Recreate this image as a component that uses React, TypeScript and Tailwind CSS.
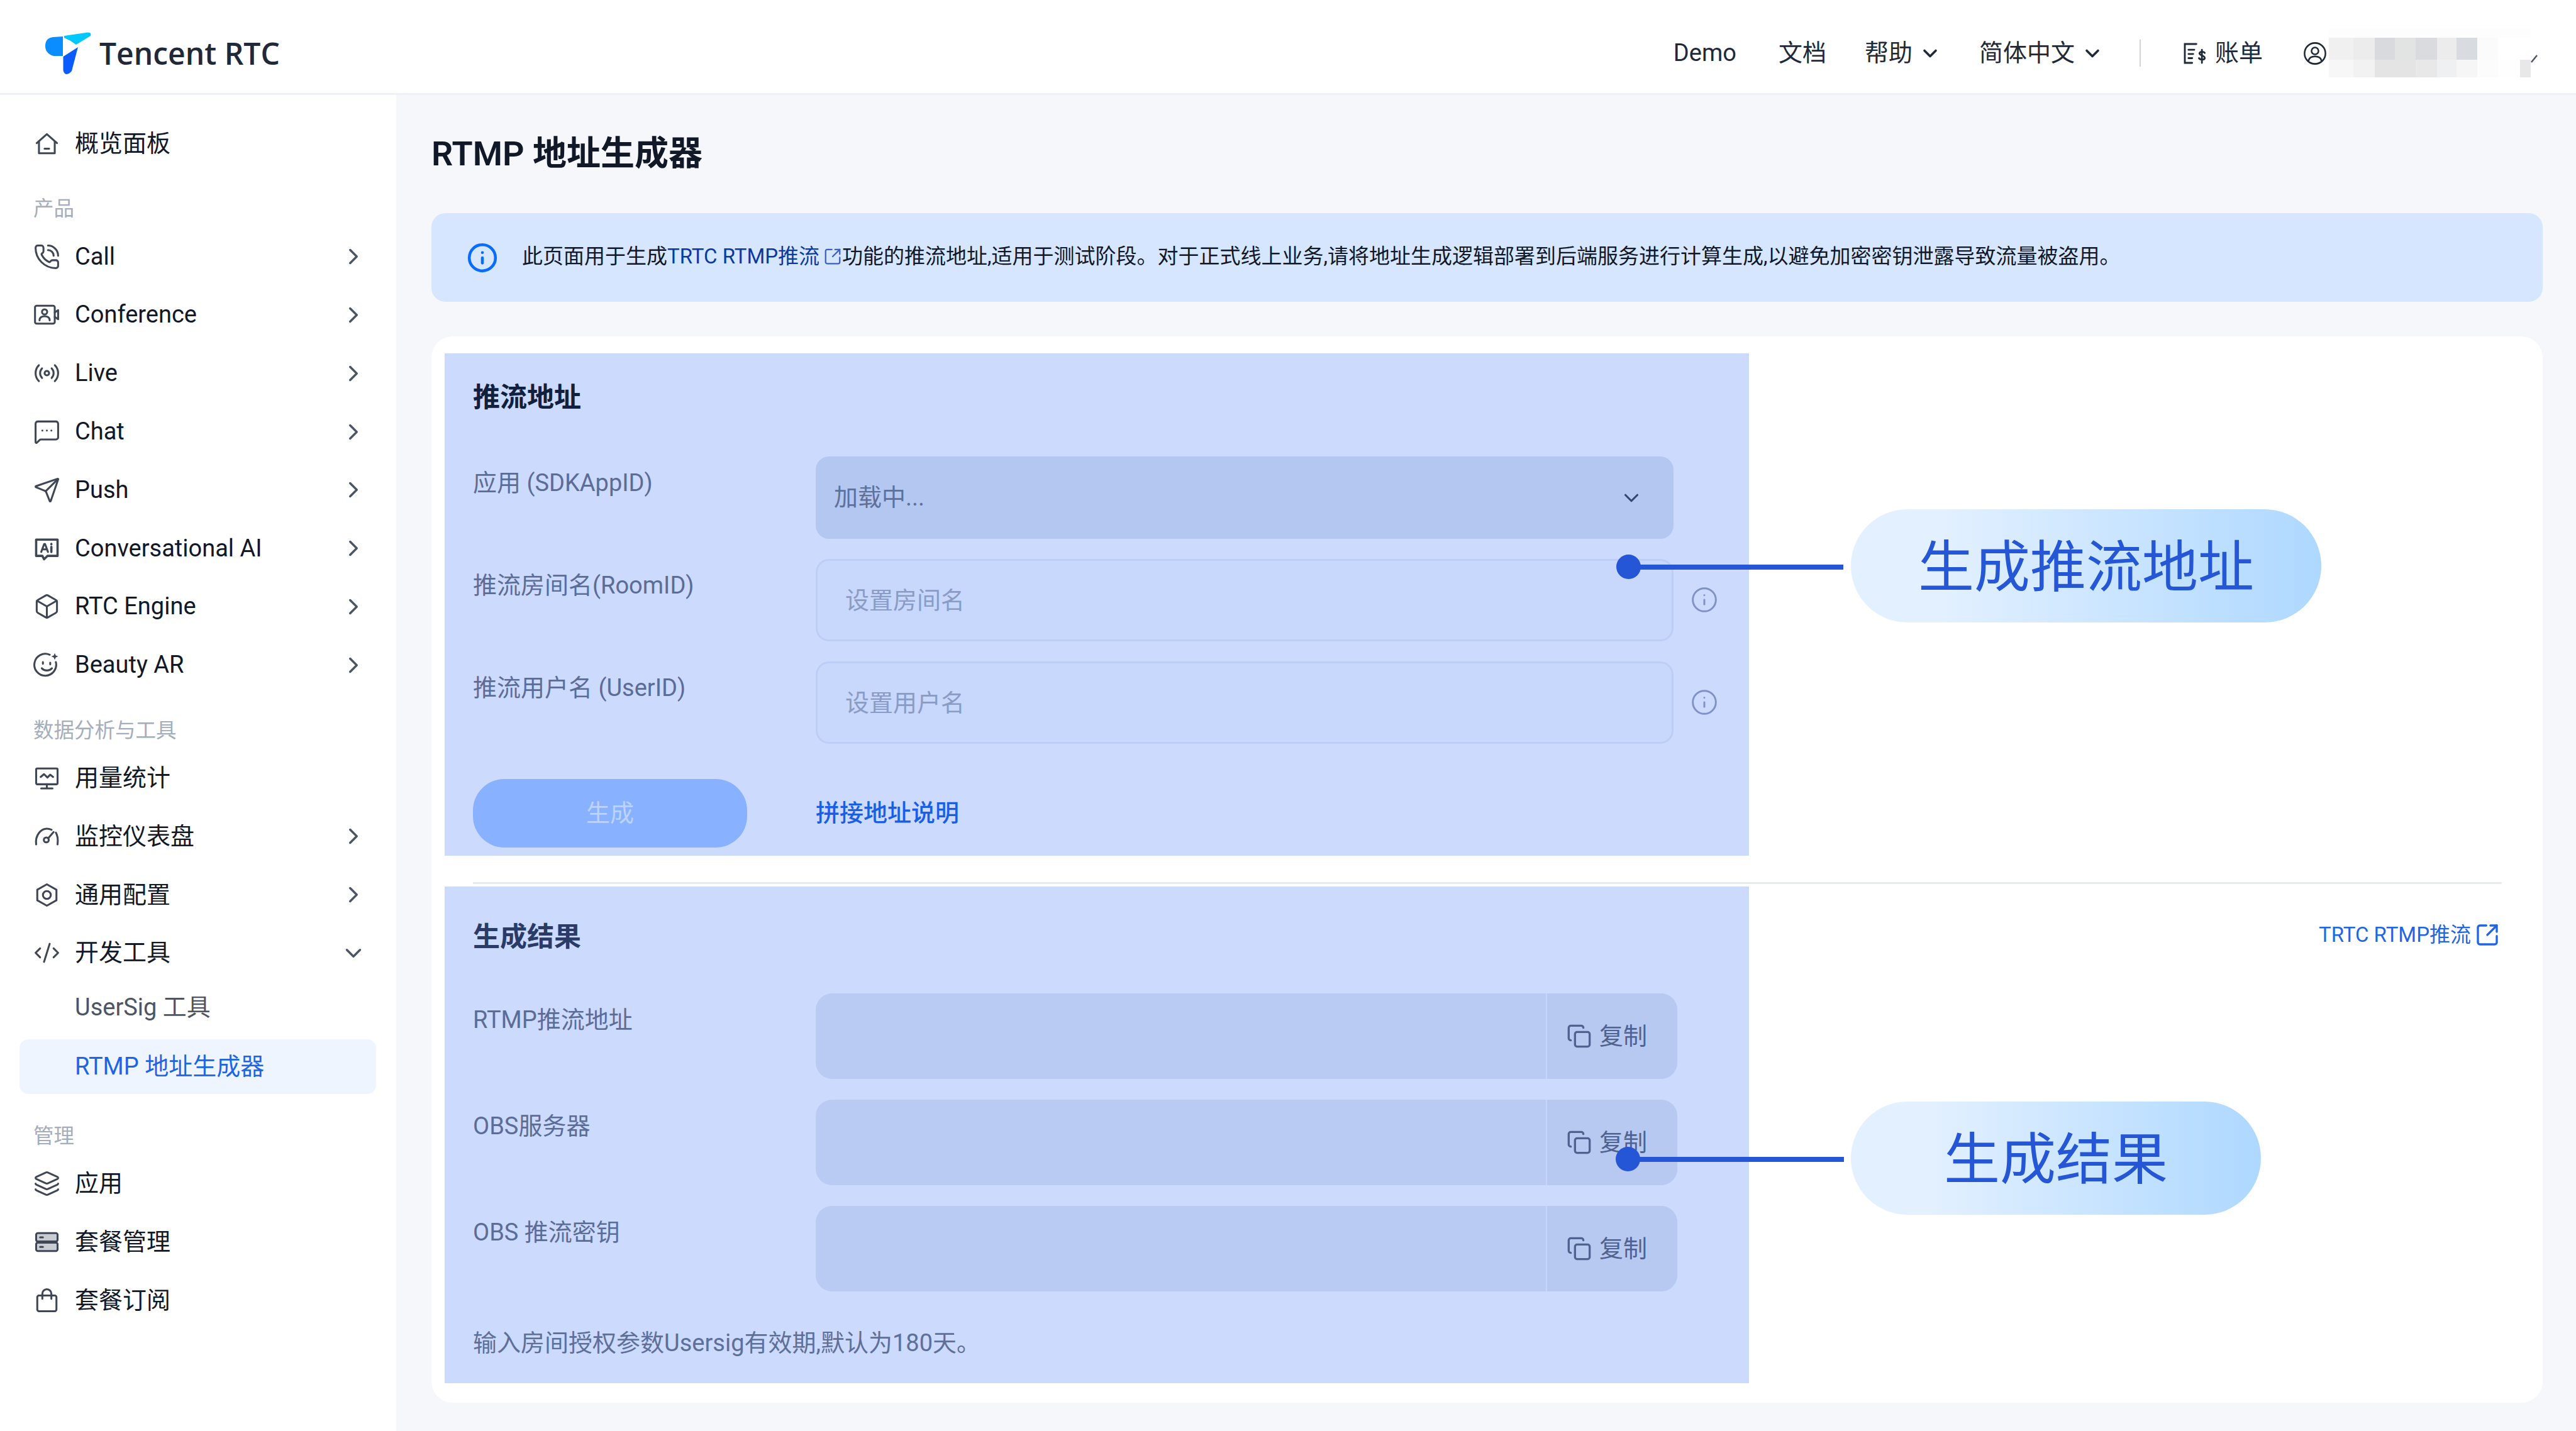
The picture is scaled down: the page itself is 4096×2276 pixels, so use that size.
import React from "react";
import { ChevronRight, ChevronDown, PhoneCall, Radio, MessageSquareMore, Send, Box, Layers, Copy, SquareArrowOutUpRight, Info, CodeXml } from "lucide-react";

const I = ({ children }: { children: React.ReactNode }) => (
  <svg viewBox="0 0 24 24" width={43} height={43} fill="none" stroke="currentColor" strokeWidth={1.7} strokeLinecap="round" strokeLinejoin="round">{children}</svg>
);
const L = (C: any) => <C size={43} strokeWidth={1.7} />;

const Home = () => <I><path d="M3 11.5 12 3.5l9 8" /><path d="M5 10v10.5h14V10" /><path d="M10 16.5h4" /></I>;
const Conf = () => <I><rect x="1.5" y="4" width="17.5" height="16" rx="1.5" /><path d="M19 10l3-2v8l-3-2" /><circle cx="10" cy="9.5" r="2.3" /><path d="M5.5 17c0-2.5 2-3.6 4.5-3.6s4.5 1.1 4.5 3.6" /></I>;
const AI = () => <I><path d="M2.5 4h19v14.5h-9l-3 3-1.5-3H2.5z" strokeWidth={2} /><path d="M7 15l2.6-7h.8l2.6 7M8 12.7h4" strokeWidth={1.7} /><path d="M16 10.5V15M16 7.8v.4" strokeWidth={2} /></I>;
const Beauty = () => <I><path d="M20 9.5A9.7 9.7 0 1 1 14.5 3" /><path d="M8.5 9.5v1.5M15 10v1.5" /><path d="M7.5 15c2.3 2.6 6.7 2.6 9 0" /><path d="M19 1.5l.9 2.1 2.1.9-2.1.9-.9 2.1-.9-2.1-2.1-.9 2.1-.9z" fill="currentColor" stroke="none" /></I>;
const Stats = () => <I><rect x="2.5" y="3.5" width="19" height="14" rx="1" /><path d="M6.5 11l3-2.5 3 3 2.5-2.5 2.5 2" /><path d="M12 17.5V21M7 21.2h10" /></I>;
const Gauge = () => <I><path d="M2.5 19C1.5 10.5 7 5 12 5c1.6 0 3 .4 4.2 1" /><path d="M20 8.5c1.6 2.6 2 6.5 1.5 10.5" /><circle cx="11.5" cy="15" r="2.2" /><path d="M13.2 13.5 18 8" /></I>;
const Gear = () => <I><path d="M12 2.5 20.5 7.3v9.4L12 21.5l-8.5-4.8V7.3z" /><circle cx="12" cy="12" r="3.5" /></I>;
const Plan = () => <I><rect x="2.5" y="4" width="19" height="7.5" rx="1.5" fill="#c9ccd2" /><rect x="2.5" y="12.5" width="19" height="7.5" rx="1.5" fill="#c9ccd2" /><path d="M6 7.8h2.5M6 16.3h2.5" /></I>;
const Bag = () => <I><rect x="3.5" y="7.5" width="17" height="14" rx="1.5" /><path d="M8 10.5V6a4 4 0 0 1 8 0v4.5" /></I>;
const Chev = () => <ChevronRight size={42} strokeWidth={2} className="text-[#4b5563]" />;

function Item({ icon, label, chev = true, open = false }: { icon: React.ReactNode; label: string; chev?: boolean; open?: boolean }) {
  return (
    <div className="flex h-[92.8px] items-center pl-[53px] pr-[47px] text-[38px] text-[#111827]">
      <span className="flex w-[43px] shrink-0 justify-center text-[#3f4654]">{icon}</span>
      <span className="ml-[23px] flex-1">{label}</span>
      {chev && (open ? <ChevronDown size={42} strokeWidth={2} className="text-[#4b5563]" /> : <Chev />)}
    </div>
  );
}
const Group = ({ label, mt }: { label: string; mt: string }) => (
  <div className={`flex h-[58px] items-center pl-[53px] text-[32.5px] text-[#a4adbb] ${mt}`}>{label}</div>
);

function Sidebar() {
  return (
    <aside className="h-full w-[630px] shrink-0 bg-white pt-[31px]">
      <Item icon={<Home />} label="概览面板" chev={false} />
      <Group label="产品" mt="mt-[29px]" />
      <Item icon={L(PhoneCall)} label="Call" />
      <Item icon={<Conf />} label="Conference" />
      <Item icon={L(Radio)} label="Live" />
      <Item icon={L(MessageSquareMore)} label="Chat" />
      <Item icon={L(Send)} label="Push" />
      <Item icon={<AI />} label="Conversational AI" />
      <Item icon={L(Box)} label="RTC Engine" />
      <Item icon={<Beauty />} label="Beauty AR" />
      <Group label="数据分析与工具" mt="mt-[29px]" />
      <Item icon={<Stats />} label="用量统计" chev={false} />
      <Item icon={<Gauge />} label="监控仪表盘" />
      <Item icon={<Gear />} label="通用配置" />
      <Item icon={L(CodeXml)} label="开发工具" open />
      <div className="-mt-[3px] flex h-[87px] items-center pl-[119px] text-[38px] text-[#4b5563]">UserSig 工具</div>
      <div className="mx-[31px] mt-[7px] flex h-[87px] w-[567px] items-center rounded-[14px] bg-[#eff5ff] pl-[88px] text-[38px] text-[#1c66e5]">RTMP 地址生成器</div>
      <Group label="管理" mt="mt-[38px]" />
      <Item icon={L(Layers)} label="应用" chev={false} />
      <Item icon={<Plan />} label="套餐管理" chev={false} />
      <Item icon={<Bag />} label="套餐订阅" chev={false} />
    </aside>
  );
}

function Mosaic() {
  const xs = [0, 39, 73, 105, 138, 172, 203, 236, 269, 304];
  const top = ["#f0f0f0", "#ececec", "#d8dade", "#e2e3e3", "#d9dbdf", "#ececec", "#d8dbe0", "#fbfbfb"];
  const bot = ["#f7f7f7", "#f2f2f2", "#e4e4e4", "#e4e4e4", "#e8e8e8", "#eef0f2", "#f6f6f6", "#fcfcfc", "#fefefe"];
  return (
    <svg width={321} height={77} shapeRendering="crispEdges">
      <rect x={0} y={0} width={321} height={14} fill="#fdfdfd" />
      {top.map((c, i) => <rect key={i} x={xs[i]} y={14} width={xs[i + 1] - xs[i]} height={35} fill={c} />)}
      {bot.map((c, i) => <rect key={i} x={xs[i]} y={49} width={xs[i + 1] - xs[i]} height={28} fill={c} />)}
      <rect x={304} y={49} width={17} height={28} fill="#e8e8e8" />
    </svg>
  );
}

function Header() {
  return (
    <header className="flex h-[151px] shrink-0 items-center border-b-[3px] border-[#eef1f6] bg-white pr-[61px] pt-[21px] text-[38px] text-[#1f2937]">
      <svg className="ml-[72px]" width={74} height={70} viewBox="72 50 74 70">
        <path d="M102 57 140 51.6Q146 52 144 57L121 71Q112 64 102 60Z" fill="#00c8fc" />
        <path d="M100 58V89H85Q72 85 72 73 72 60 85 59Z" fill="#0a8dff" />
        <path d="M100.5 90 124 75 114 113Q108 120 103 117 100 114 100.5 108Z" fill="#0a5cff" />
      </svg>
      <span className="ml-[12px] font-['Open_Sans','Inter',sans-serif] text-[48px] font-semibold text-[#1f2937]">Tencent RTC</span>
      <div className="ml-auto flex items-center">
        <span>Demo</span>
        <span className="ml-[67px]">文档</span>
        <span className="ml-[61px]">帮助</span>
        <ChevronDown size={36} strokeWidth={2.4} className="ml-[10px]" />
        <span className="ml-[60px]">简体中文</span>
        <ChevronDown size={36} strokeWidth={2.4} className="ml-[10px]" />
        <span className="ml-[57px] h-[43px] w-[2px] bg-[#d1d5db]" />
        <svg className="ml-[65px]" viewBox="0 0 24 24" width={40} height={44} fill="none" stroke="currentColor" strokeWidth={1.7} strokeLinecap="round">
          <path d="M14 3H3v18h7" /><path d="M6.5 8.5H12M6.5 12.5H11M6.5 16.5H10" />
          <path d="M22 11.5c-.7-1.3-4.5-1.7-5 .3-.4 2 5 2 5 4.5 0 2-4.5 2-5.5.2M19.3 8.500v12.500" />
        </svg>
        <span className="ml-[13px]">账单</span>
        <svg className="ml-[64px]" viewBox="0 0 24 24" width={38} height={38} fill="none" stroke="currentColor" strokeWidth={1.6}>
          <circle cx="12" cy="12" r="10.5" /><circle cx="12" cy="9.5" r="3.5" /><path d="M5.5 19.5c.5-3.5 3-4.5 6.5-4.5s6 1 6.5 4.5" />
        </svg>
        <div className="ml-[3px]"><Mosaic /></div>
        <svg width={11} height={14} className="mt-[16px]"><path d="M1 13 10 2" stroke="#4b5563" strokeWidth={2.5} /></svg>
      </div>
    </header>
  );
}

const Label = ({ children }: { children: React.ReactNode }) => (
  <div className="h-[80px] w-[545px] shrink-0 pt-[2px] text-[38px] leading-[80px] text-[#5b6c96]">{children}</div>
);
const InfoI = () => <Info size={44} strokeWidth={1.6} className="ml-[27px] text-[#7f92c8]" />;

function InputRow({ label, ph }: { label: string; ph: string }) {
  return (
    <div className="mb-[33px] flex h-[130px]">
      <Label>{label}</Label>
      <div className="flex h-[131px] w-[1364px] items-center rounded-[21px] border-[3px] border-[#bccdf6] bg-[#c8d7fc] pl-[44px] pt-[2px] text-[38px] text-[#8a9bc4]">{ph}</div>
      <div className="flex items-center"><InfoI /></div>
    </div>
  );
}
function CopyRow({ label }: { label: string }) {
  return (
    <div className="mb-[33px] flex h-[136px]">
      <Label>{label}</Label>
      <div className="flex h-[136px] w-[1370px] overflow-hidden rounded-[26px] bg-[#bacbf3]">
        <div className="w-[1163px] border-r-[2px] border-[#c6d5f8]" />
        <div className="flex flex-1 items-center bg-[#b7c9f1] pl-[31px] text-[38px] text-[#50628f]">
          <Copy size={40} strokeWidth={2} />
          <span className="ml-[12px]">复制</span>
        </div>
      </div>
    </div>
  );
}

function Callout({ text, left, top, w, h, dotLeft, dotTop }: { text: string; left: string; top: string; w: string; h: string; dotLeft: string; dotTop: string }) {
  return (
    <>
      <div className={`absolute z-10 h-[39px] w-[39px] rounded-full bg-[#2456d6] ${dotLeft} ${dotTop}`} />
      <div className={`absolute z-10 flex items-center justify-center rounded-full bg-linear-to-r from-[#e2f0ff] from-20% to-[#aed8ff] pt-[5px] text-[89px] text-[#2456d6] ${left} ${top} ${w} ${h}`}>{text}</div>
    </>
  );
}

function Card() {
  return (
    <div className="relative mt-[55px] h-[1696px] rounded-[34px] bg-white pl-[21px] pt-[27px]">
      <section className="h-[799px] w-[2074px] bg-[#ccdafe] pl-[45px] pt-[38px]">
        <h2 className="mb-[62px] h-[64px] text-[43px] font-semibold leading-[64px] text-[#10203f]">推流地址</h2>
        <div className="mb-[33px] flex h-[130px]">
          <Label>应用 (SDKAppID)</Label>
          <div className="flex h-[131px] w-[1364px] items-center justify-between rounded-[21px] bg-[#b3c7f1] pl-[29px] pr-[48px] text-[38px] text-[#5f7099]">
            <span>加载中...</span>
            <ChevronDown size={38} strokeWidth={2} className="text-[#34456f]" />
          </div>
        </div>
        <InputRow label="推流房间名(RoomID)" ph="设置房间名" />
        <InputRow label="推流用户名 (UserID)" ph="设置用户名" />
        <div className="mt-[57px] flex items-center">
          <button className="h-[109px] w-[436px] rounded-[50px] bg-[#88b1ff] text-[38px] text-[#bcd3ff]">生成</button>
          <a className="ml-[109px] text-[38px] font-medium text-[#1a5ee8]">拼接地址说明</a>
        </div>
      </section>
      <div className="ml-[45px] mr-[65px] mt-[42px] h-[3px] bg-[#e6eaf3]" />
      <div className="mt-[4px] flex">
        <section className="h-[790px] w-[2074px] shrink-0 bg-[#ccdafe] pl-[45px] pt-[48px]">
          <h2 className="mb-[58px] h-[64px] text-[43px] font-semibold leading-[64px] text-[#2b3b67]">生成结果</h2>
          <CopyRow label="RTMP推流地址" />
          <CopyRow label="OBS服务器" />
          <CopyRow label="OBS 推流密钥" />
          <p className="mt-[57px] text-[38px] leading-[50px] text-[#5e6f98]">输入房间授权参数Usersig有效期,默认为180天。</p>
        </section>
        <div className="flex flex-1 justify-end pr-[68px] pt-[52px]">
          <a className="flex h-[50px] items-center text-[33px] text-[#1f66e0]">TRTC RTMP推流<SquareArrowOutUpRight size={40} strokeWidth={2} className="ml-[6px]" /></a>
        </div>
      </div>

      <div className="absolute left-[1903px] top-[363px] z-10 h-[8px] w-[342px] bg-[#2456d6]" />
      <Callout text="生成推流地址" left="left-[2257px]" top="top-[275px]" w="w-[748px]" h="h-[180px]" dotLeft="left-[1884px]" dotTop="top-[347px]" />
      <div className="absolute left-[1902px] top-[1305px] z-10 h-[8px] w-[344px] bg-[#2456d6]" />
      <Callout text="生成结果" left="left-[2257px]" top="top-[1217px]" w="w-[652px]" h="h-[180px]" dotLeft="left-[1883px]" dotTop="top-[1289px]" />
    </div>
  );
}

export default function App() {
  return (
    <div className="flex h-[2276px] w-[4096px] flex-col overflow-hidden bg-[#f6f7fb] font-['Roboto','Noto_Sans_CJK_SC',sans-serif]">
      <Header />
      <div className="flex min-h-0 flex-1">
        <Sidebar />
        <main className="flex-1 pl-[56px] pr-[53px] pt-[59px]">
          <h1 className="h-[70px] text-[54px] font-semibold leading-[70px] text-[#111827]">RTMP 地址生成器</h1>
          <div className="mt-[59px] flex h-[141px] items-center rounded-[22px] bg-[#d5e6fe] pl-[56px] text-[33px] text-[#111827]">
            <Info size={50} strokeWidth={2.2} className="text-[#0a6cff]" />
            <span className="ml-[38px] -mt-[3px] flex items-center whitespace-nowrap">
              此页面用于生成<span className="text-[#0b3a9f]">TRTC RTMP推流</span>
              <SquareArrowOutUpRight size={30} strokeWidth={1.8} className="ml-[6px] text-[#3b5fc4]" />
              功能的推流地址,适用于测试阶段。对于正式线上业务,请将地址生成逻辑部署到后端服务进行计算生成,以避免加密密钥泄露导致流量被盗用。
            </span>
          </div>
          <Card />
        </main>
      </div>
    </div>
  );
}
